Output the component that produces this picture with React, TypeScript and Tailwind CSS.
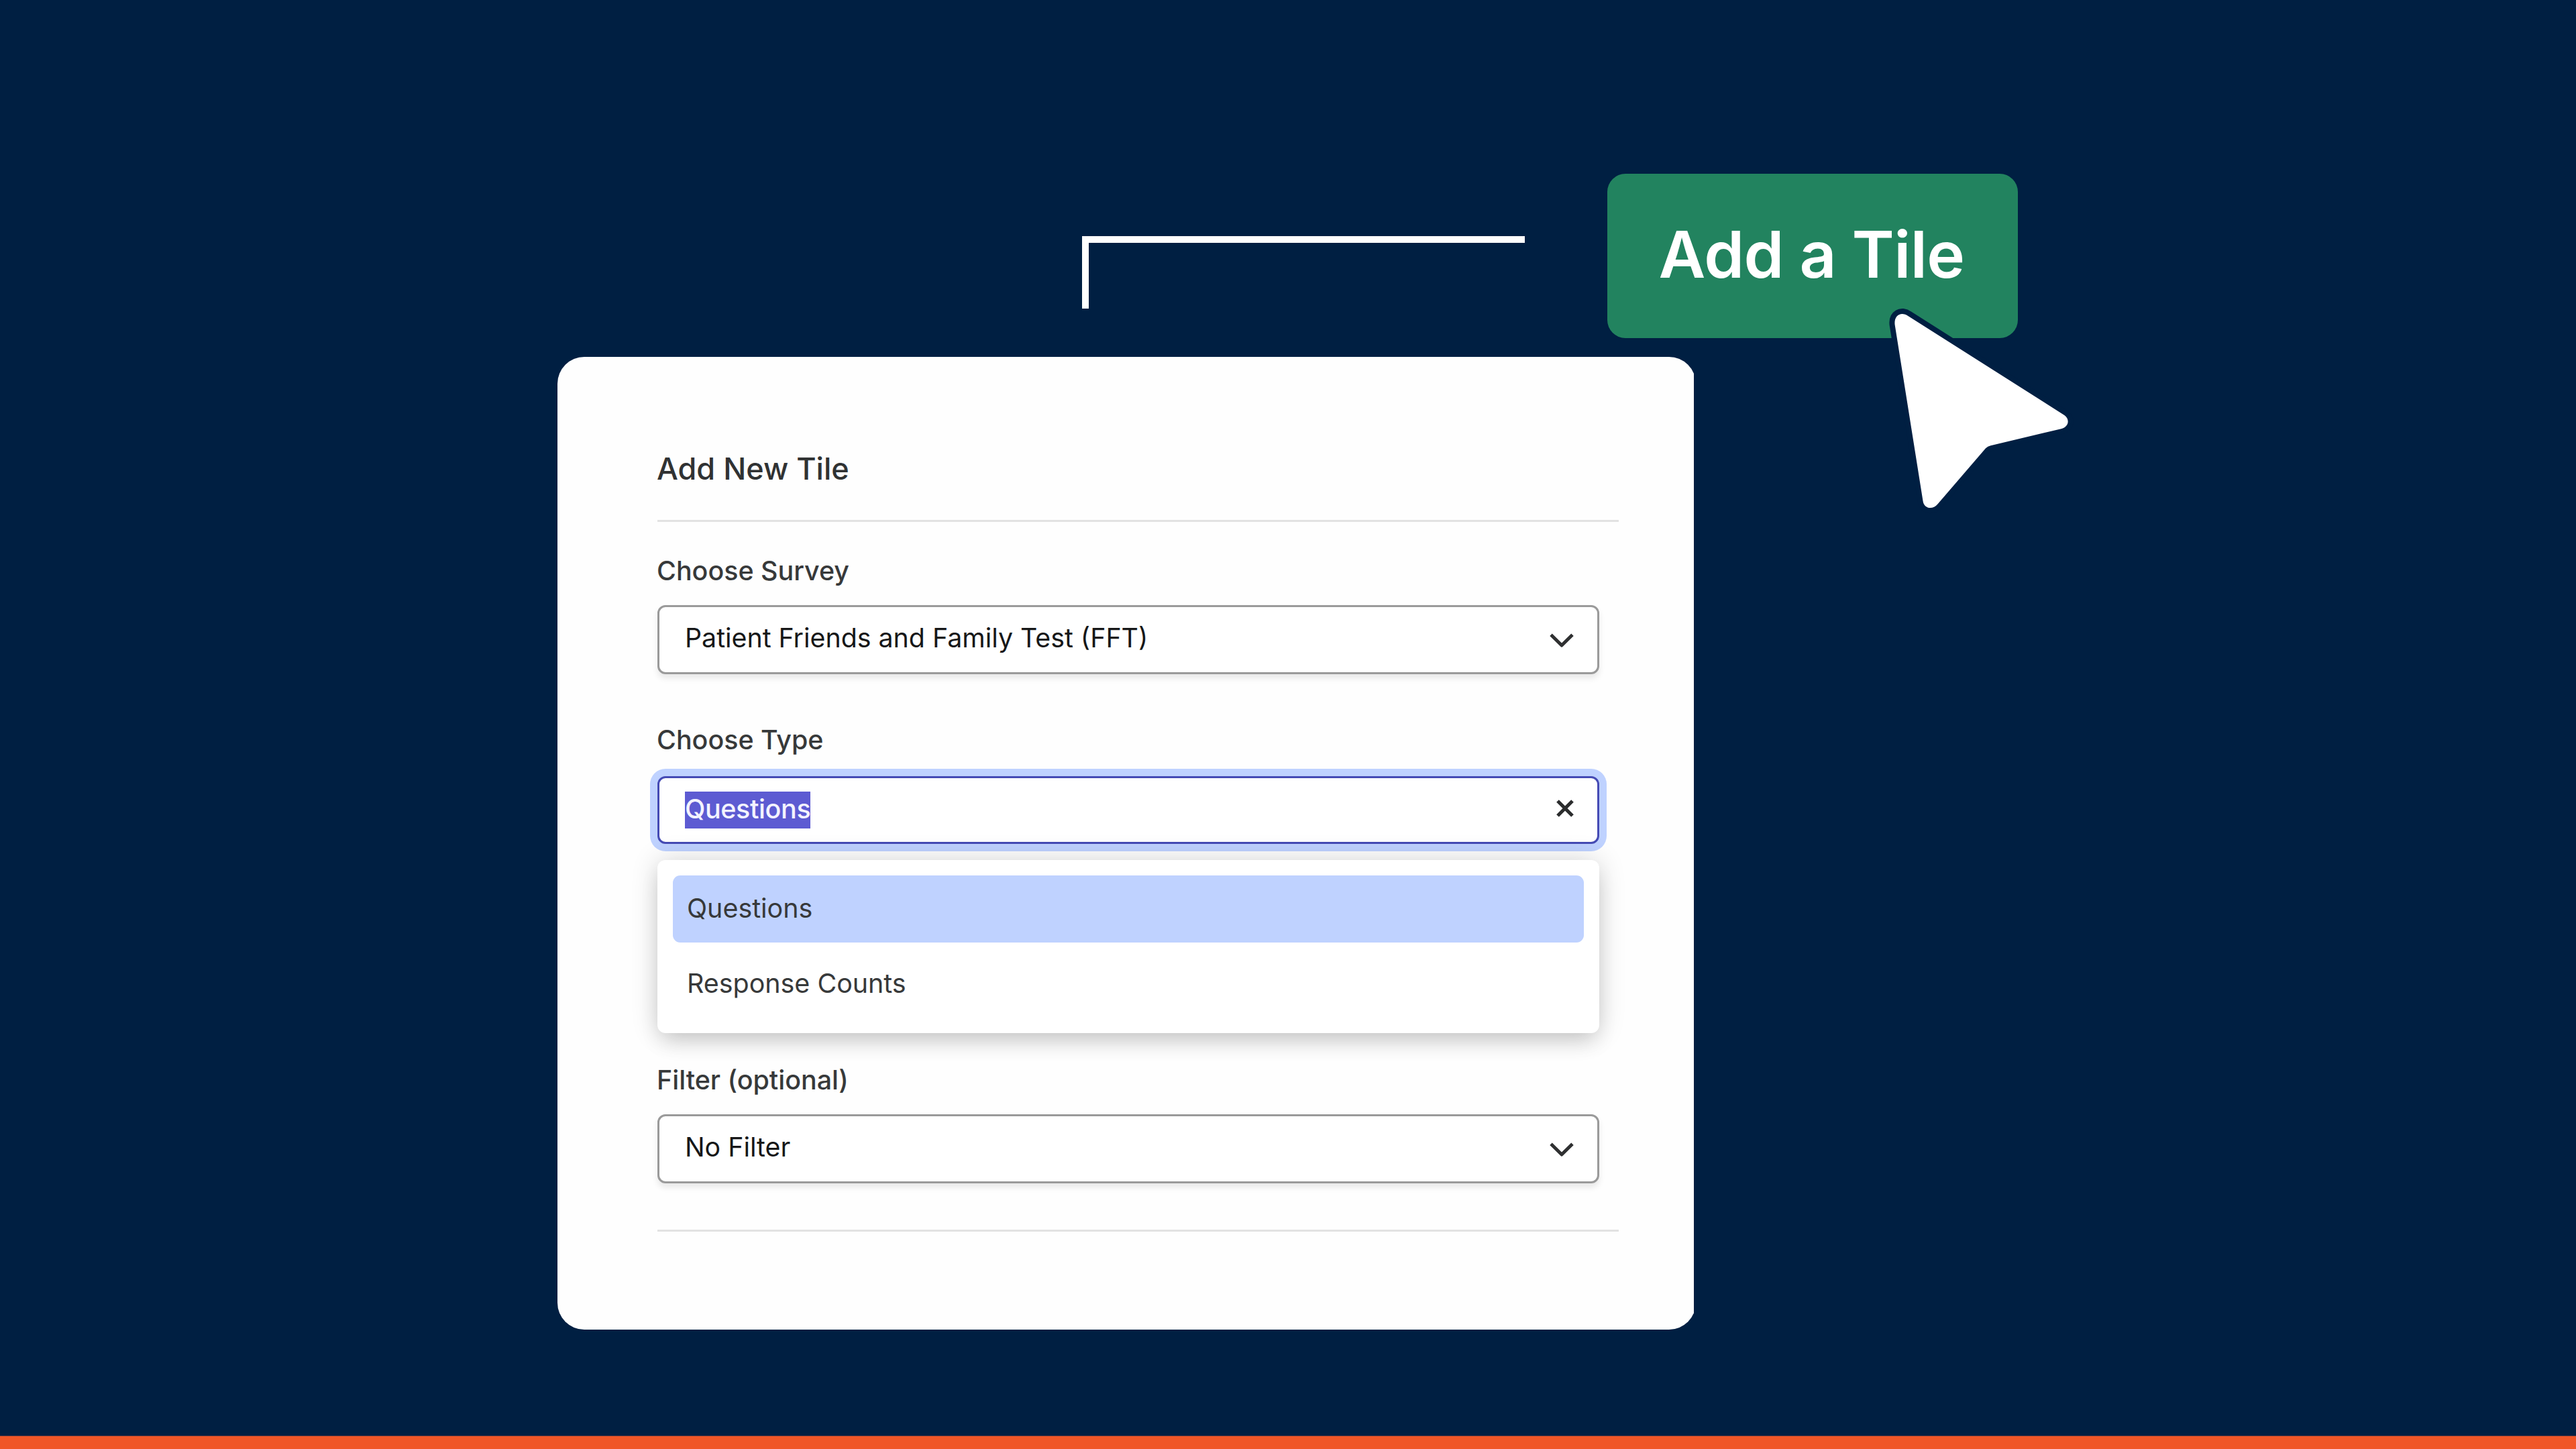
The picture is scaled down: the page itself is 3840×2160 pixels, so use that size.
import { clsx } from "clsx"

const options = ["Questions", "Response Counts"]

function Chevron() {
  return (
    <svg viewBox="0 0 36 22" className="w-[36px] h-[22px]" fill="none" stroke="#2f3031" strokeWidth={5}>
      <path d="M2 2.2 18 18 34 2.2" strokeLinejoin="round" />
    </svg>
  )
}

function Label({ children, className }: { children: string; className?: string }) {
  return (
    <label className={clsx("block -ml-[1px] text-[39.4px] leading-[48px] font-[480] text-[#37393a]", className)}>
      {children}
    </label>
  )
}

function Select({ value, className }: { value: string; className?: string }) {
  return (
    <div
      className={clsx(
        "w-[1404px] flex justify-between rounded-[12px] border-[3px] border-[#9a9a9a] bg-white pl-[38px] pr-[35px] shadow-[0_6px_10px_rgba(0,0,0,0.09)]",
        className
      )}
    >
      <span className="pt-[22px] text-[39.3px] leading-[48px] text-[#161718]">{value}</span>
      <span className="pt-[39px]">
        <Chevron />
      </span>
    </div>
  )
}

function TypeCombobox() {
  return (
    <div className="relative w-[1404px] mt-[30px]">
      <div className="h-[101px] flex justify-between rounded-[12px] border-[3px] border-[#454bb5] bg-white pl-[38px] pr-[35px] shadow-[0_0_0_11px_#bfd2ff]">
        <span className="mt-[20px] h-[55px] leading-[53px] bg-[#5d5bd2] text-[39.5px] font-medium tracking-[-0.4px] text-[#f3f3ff]">
          Questions
        </span>
        <svg viewBox="0 0 26 26" className="mt-[32px] w-[26px] h-[26px]" stroke="#2b2c2d" strokeWidth={5.2}>
          <path d="M2 2 24 24M24 2 2 24" />
        </svg>
      </div>

      <ul className="absolute left-0 top-[125px] w-full h-[258px] p-[23px] flex flex-col gap-[12px] rounded-[12px] bg-white shadow-[0_0_40px_rgba(0,0,0,0.16),0_18px_32px_-6px_rgba(0,0,0,0.14)]">
        {options.map((option, i) => (
          <li
            key={option}
            className={clsx(
              "h-[100px] shrink-0 rounded-[11px] pl-[21px] pt-[25px] text-[39.4px] leading-[48px] text-[#37393a]",
              i === 0 && "bg-[#bfd2ff]"
            )}
          >
            {option}
          </li>
        ))}
      </ul>
    </div>
  )
}

function Cursor() {
  return (
    <svg viewBox="2800 440 300 340" className="absolute left-[404px] top-[181px] w-[300px] h-[340px]">
      <path
        d="M2824.6 484C2823 470 2834 463.500 2844.700 471.200L3077.400 619C3085.500 624.500 3084.500 636 3072.500 639.200L2967.400 664.300Q2963 665.500 2960 668.300L2888.400 751.500C2881 760.500 2868 758.500 2866.500 746.800Z"
        fill="#fff"
        stroke="#001f42"
        strokeWidth={16}
        strokeLinejoin="round"
        paintOrder="stroke"
      />
    </svg>
  )
}

export default function App() {
  return (
    <div className="w-[3840px] h-[2160px] flex flex-col overflow-hidden bg-[#001f42] font-['Inter','Liberation_Sans',sans-serif]">
      <header className="h-[532px] flex items-start pl-[1613px]">
        <div className="mt-[352px] w-[660px] h-[108px] border-t-[10px] border-l-[10px] border-white" />
        <div className="relative ml-[123px] mt-[259px]">
          <button className="block w-[612px] h-[245px] pb-[6px] pr-[3px] rounded-[27px] bg-[#22835f] text-[96px] font-[570] tracking-[-0.6px] leading-[116px] text-white">
            Add a Tile
          </button>
          <Cursor />
        </div>
      </header>

      {/* the card runs a little past its right edge, so the right corners are cut */}
      <main className="ml-[831px] w-[1694px] h-[1450px] overflow-hidden">
        <div className="w-[1697px] h-[1450px] rounded-[40px] bg-[#fefefe] pl-[149px] pt-[139px]">
          <h1 className="-ml-[1px] text-[45px] leading-[56px] font-[480] text-[#303233]">Add New Tile</h1>
          <hr className="mt-[48px] w-[1433px] border-t-[3px] border-[#e2e2e2]" />

          <Label className="mt-[49px]">Choose Survey</Label>
          <Select value="Patient Friends and Family Test (FFT)" className="mt-[27px] h-[103px]" />

          <Label className="mt-[74px]">Choose Type</Label>
          <TypeCombobox />

          <Label className="mt-[328px]">Filter (optional)</Label>
          <Select value="No Filter" className="mt-[27px] h-[103px]" />

          <hr className="mt-[69px] w-[1433px] border-t-[3px] border-[#e2e2e2]" />
        </div>
      </main>

      <footer className="mt-auto h-[20px] border-t border-[#6e3a3a] bg-[#f05627]" />
    </div>
  )
}
